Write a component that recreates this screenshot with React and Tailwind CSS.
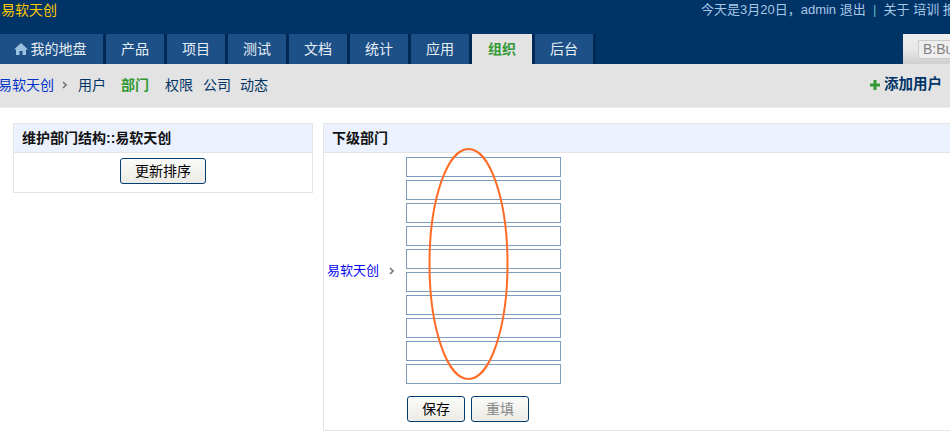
const TABS = ['产品', '项目', '测试', '文档', '统计', '应用']
const SUB = [
  { label: '用户', cls: 'ml-[11px] w-[43px] text-[#003366]' },
  { label: '部门', cls: 'w-[44px] font-bold text-[#339933]' },
  { label: '权限', cls: 'w-[38px] text-[#003366]' },
  { label: '公司', cls: 'w-[37px] text-[#003366]' },
  { label: '动态', cls: 'w-[30px] text-[#003366]' },
]
const INPUTS = [0, 1, 2, 3, 4, 5, 6, 7, 8, 9]

function Tab({ children, className = 'w-[58px]' }) {
  return (
    <a className={`flex h-[30px] items-center justify-center border-r-[3px] border-[#002a55] bg-[#1c5087] text-[14px] text-[#e8eef5] box-content ${className}`}>
      {children}
    </a>
  )
}

function Btn({ children, className = '' }) {
  return (
    <button className={`h-[26px] rounded-[3px] border border-[#003f73] bg-gradient-to-b from-[#fbfbf9] to-[#ecebe5] text-[14px] ${className}`}>
      {children}
    </button>
  )
}

function Chevron({ className = '' }) {
  return (
    <svg className={`shrink-0 ${className}`} width="5" height="8" viewBox="0 0 5 8" fill="none">
      <path d="M1 1 L4 4 L1 7" stroke="#777777" strokeWidth="1.600" />
    </svg>
  )
}

export default function App() {
  return (
    <div className="relative h-[434px] w-[950px] overflow-hidden bg-white font-['Liberation_Sans','Noto_Sans_CJK_SC',sans-serif]">
      {/* Header */}
      <div className="h-[64px] bg-[#003366]">
        <div className="flex h-[34px] items-start justify-between">
          <span className="pl-[1px] pt-[2px] text-[14px] leading-[16px] text-[#ffcc00]">易软天创</span>
          <div className="w-[249px] shrink-0 overflow-hidden whitespace-nowrap pt-[2px] text-[13px] leading-[16px] text-[#a9c8e6]">
            今天是3月20日，admin 退出 &nbsp;<span className="text-[#66b8c8]">|</span>&nbsp; 关于 培训 报价
          </div>
        </div>
        <div className="flex h-[30px]">
          <Tab className="w-[100px] gap-[3px] pr-[3px]">
            <svg width="14" height="12" viewBox="0 0 14 12" fill="#9cc0e0">
              <path d="M7 0 L14 6.500 L12 6.500 L12 12 L8.500 12 L8.500 8 L5.500 8 L5.500 12 L2 12 L2 6.500 L0 6.500 Z" />
            </svg>
            我的地盘
          </Tab>
          {TABS.map(t => <Tab key={t}>{t}</Tab>)}
          <a className="flex h-[30px] w-[60px] items-center justify-center border-x-[3px] border-[#002a55] bg-[#e3e3e3] text-[14px] font-bold text-[#339933] box-content -ml-[3px]">组织</a>
          <Tab>后台</Tab>
          <div className="ml-auto flex h-[30px] w-[47px] items-center justify-start bg-gradient-to-b from-[#eeeeee] via-[#e8e8e8] to-[#cfcfcf] pl-[15px]">
            <div className="h-[19px] w-[40px] shrink-0 border border-[#cccccc] bg-[#eeeeee] pl-[4px] text-[14px] leading-[17px] text-[#808080]">B:Bug</div>
          </div>
        </div>
      </div>

      {/* Sub nav */}
      <div className="flex h-[44px] items-center justify-between border-b border-[#eeeeee] bg-[#e3e3e3] pb-[1px] text-[14px]">
        <div className="flex items-center">
          <span className="-ml-[2px] w-[56px] whitespace-nowrap text-[#0033cc]">易软天创</span>
          <Chevron className="ml-[8px]" />
          {SUB.map(s => <span key={s.label} className={s.cls}>{s.label}</span>)}
        </div>
        <div className="flex items-center gap-[4px] pr-[8px] text-[14.500px] font-bold text-[#003366]">
          <svg width="10" height="10" viewBox="0 0 10 10" fill="#339933">
            <path d="M3.500 0h3v3.500H10v3H6.500V10h-3V6.500H0v-3h3.500z" />
          </svg>
          添加用户
        </div>
      </div>

      {/* Content */}
      <div className="flex items-start gap-[10px] pl-[13px] pt-[15px]">
        <div className="h-[70px] w-[300px] shrink-0 border border-[#e4e4e4]">
          <div className="h-[29px] border-b border-[#e4e4e4] bg-[#ebf2fd] pl-[8px] text-[14px] font-bold leading-[28px] text-[#111111]">
            维护部门结构::易软天创
          </div>
          <div className="flex justify-center pt-[5px]">
            <Btn className="w-[86px]">更新排序</Btn>
          </div>
        </div>

        <div className="h-[308px] w-[640px] shrink-0 border border-[#e4e4e4]">
          <div className="h-[29px] border-b border-[#e4e4e4] bg-[#ebf2fd] pl-[8px] text-[14px] font-bold leading-[28px] text-[#111111]">
            下级部门
          </div>
          <div className="flex pt-[4px]">
            <div className="flex h-[227px] w-[82px] shrink-0 items-center pl-[3px] text-[13px] text-[#0000ee]">
              <span>易软天创</span>
              <Chevron className="ml-[10px]" />
            </div>
            <div>
              <div className="flex flex-col gap-[3px]">
                {INPUTS.map(i => (
                  <input key={i} className="h-[20px] w-[155px] border border-[#7c9dbd] bg-white" />
                ))}
              </div>
              <div className="ml-[1px] mt-[12px] flex gap-[6px]">
                <Btn className="w-[58px]">保存</Btn>
                <Btn className="w-[58px] text-[#888888]">重填</Btn>
              </div>
            </div>
          </div>
        </div>
      </div>

      {/* Annotation drawn over the form */}
      <svg className="absolute left-[425px] top-[145px]" width="90" height="240" viewBox="0 0 90 240" fill="none">
        <ellipse cx="43.500" cy="119" rx="39" ry="115" stroke="#ff6c26" strokeWidth="2" />
      </svg>
    </div>
  )
}
